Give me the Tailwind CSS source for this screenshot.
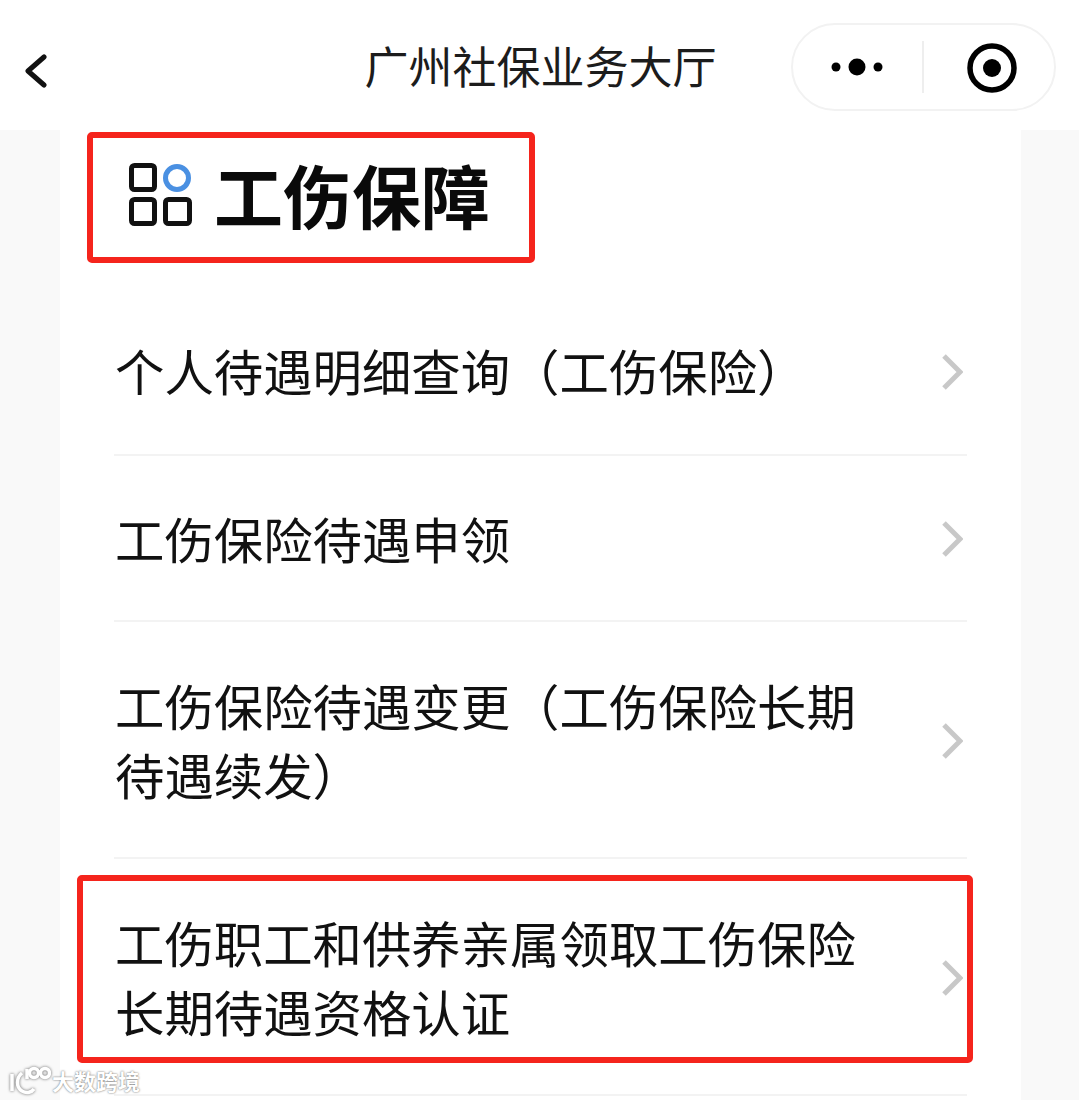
<!DOCTYPE html>
<html lang="zh-CN">
<head>
  <meta charset="UTF-8" />
  <meta name="viewport" content="width=device-width, initial-scale=1.0"/>
  <title>广州社保业务大厅</title>
  <script src="https://cdn.jsdelivr.net/npm/@tailwindcss/browser@4"></script>
</head>
<body class="relative h-[1100px] overflow-hidden bg-[#f9f9f9] font-['Noto_Sans_CJK_SC','Noto_Sans',sans-serif] text-[#111]">

  <!-- nav bar -->
  <div class="relative flex h-[130px] items-center justify-center bg-white">
    <svg class="absolute left-[24px] top-[54px]" width="24" height="34" viewBox="0 0 24 34" fill="none" stroke="#111" stroke-width="5" stroke-linecap="round" stroke-linejoin="round"><path d="M20 3 L4 17 L20 31"/></svg>
    <span class="ml-[2px] mt-[-1px] text-[44px] leading-none text-[#1c1c1c]">广州社保业务大厅</span>
    <div class="absolute left-[791px] top-[23px] flex h-[88px] w-[265px] items-center rounded-full border-2 border-[#f2f2f2] bg-white">
      <div class="flex w-[129px] items-center justify-center">
        <svg width="54" height="20" viewBox="0 0 54 20" fill="#000"><circle cx="5" cy="10" r="4.5"/><circle cx="26" cy="10" r="8.5"/><circle cx="47" cy="10" r="4.5"/></svg>
      </div>
      <div class="h-[52px] w-[2px] bg-[#eeeeee]"></div>
      <div class="flex flex-1 items-center justify-center">
        <svg class="ml-[6px] mt-[2px]" width="50" height="50" viewBox="0 0 50 50" fill="none"><circle cx="25" cy="25" r="22" stroke="#000" stroke-width="5.5"/><circle cx="25" cy="25" r="9" fill="#000"/></svg>
      </div>
    </div>
  </div>

  <!-- card -->
  <div class="ml-[60px] h-[970px] w-[961px] bg-white">
    <div class="flex h-[158px] items-start pl-[69px] pt-[32px]">
      <svg width="64" height="64" viewBox="0 0 64 64" fill="none" stroke="#111" stroke-width="5">
        <rect x="2.5" y="3.5" width="23" height="24" rx="3"/>
        <rect x="2.5" y="37.5" width="23" height="24" rx="3"/>
        <rect x="36.5" y="37.5" width="24" height="24" rx="3"/>
        <circle cx="48" cy="16" r="11.5" stroke="#4a90e2"/>
      </svg>
      <h1 class="ml-[21px] mt-[-10px] text-[69px] font-bold leading-[84px] text-[#0a0a0a]">工伤保障</h1>
    </div>

    <div class="mx-[54px]">
      <div class="flex h-[168px] items-center justify-between border-b-2 border-[#f3f3f3] pb-[4px] pl-[1px] pr-[4px]">
        <p class="w-[760px] text-[49.4px] leading-[69px]">个人待遇明细查询（工伤保险）</p>
        <svg class="mt-[6px]" width="22" height="36" viewBox="0 0 22 36" fill="none" stroke="#c8c8c8" stroke-width="5"><path d="M3 2 L19 18 L3 34"/></svg>
      </div>
      <div class="flex h-[166px] items-center justify-between border-b-2 border-[#f3f3f3] pb-[2px] pl-[1px] pr-[4px]">
        <p class="w-[760px] text-[49.4px] leading-[69px]">工伤保险待遇申领</p>
        <svg class="mt-[4px]" width="22" height="36" viewBox="0 0 22 36" fill="none" stroke="#c8c8c8" stroke-width="5"><path d="M3 2 L19 18 L3 34"/></svg>
      </div>
      <div class="flex h-[237px] items-center justify-between border-b-2 border-[#f3f3f3] pb-[2px] pl-[1px] pr-[4px]">
        <p class="w-[760px] text-[49.4px] leading-[69px]">工伤保险待遇变更（工伤保险长期待遇续发）</p>
        <svg class="mt-[4px]" width="22" height="36" viewBox="0 0 22 36" fill="none" stroke="#c8c8c8" stroke-width="5"><path d="M3 2 L19 18 L3 34"/></svg>
      </div>
      <div class="flex h-[237px] items-center justify-between border-b-2 border-[#f3f3f3] pb-[2px] pl-[1px] pr-[4px]">
        <p class="w-[760px] text-[49.4px] leading-[69px]">工伤职工和供养亲属领取工伤保险长期待遇资格认证</p>
        <svg class="mt-[4px]" width="22" height="36" viewBox="0 0 22 36" fill="none" stroke="#c8c8c8" stroke-width="5"><path d="M3 2 L19 18 L3 34"/></svg>
      </div>
    </div>
  </div>

  <!-- red annotation boxes -->
  <div class="absolute left-[87px] top-[132px] h-[131px] w-[448px] rounded-[5px] border-[6px] border-[#f5241c]"></div>
  <div class="absolute left-[77px] top-[875px] h-[188px] w-[896px] rounded-[5px] border-[6px] border-[#f5241c]"></div>

  <!-- watermark -->
  <div class="absolute left-[9px] top-[1064px] flex items-center">
    <svg width="42" height="32" viewBox="0 0 42 32" fill="none" stroke="#fff" stroke-width="3.5" style="filter: drop-shadow(0 0 1.5px #666)">
      <path d="M3 10 V27 M13 9 C7 14 7 23 13 27 C18 30 23 28 25 25"/>
      <path d="M18 5 V15"/>
      <circle cx="25" cy="9" r="4.5"/>
      <circle cx="36" cy="9" r="4.5"/>
    </svg>
    <span class="ml-[1px] text-[22px] font-bold leading-none text-white [text-shadow:0_0_2px_#555]">大数跨境</span>
  </div>

</body>
</html>
